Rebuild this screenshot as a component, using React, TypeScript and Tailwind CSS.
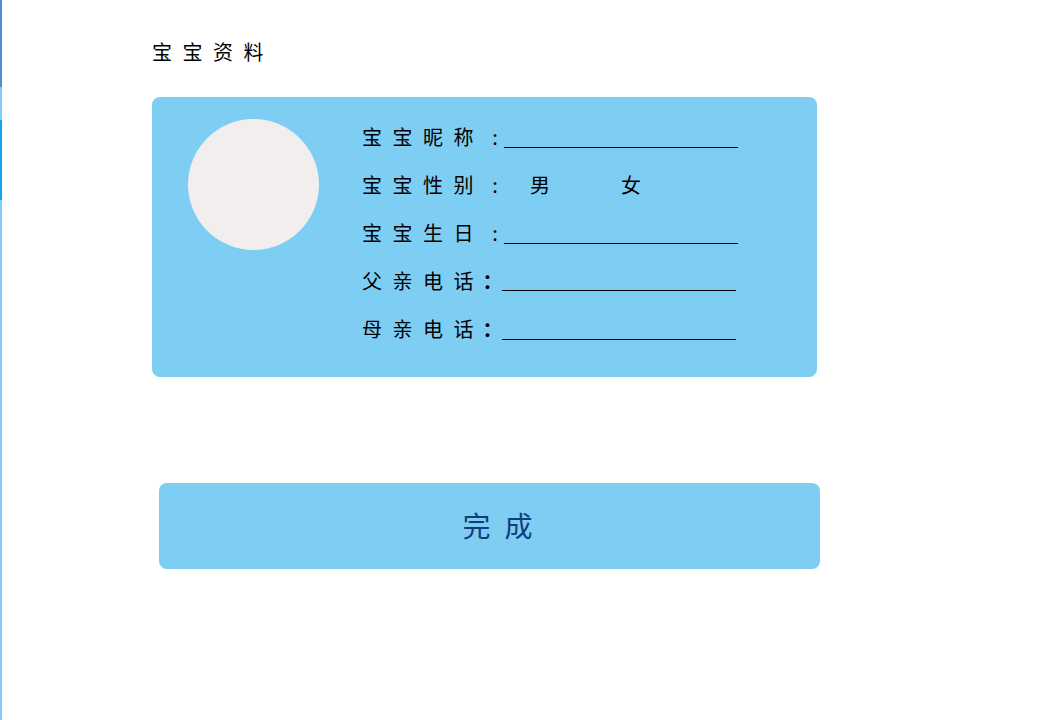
function Label({ text }: { text: string }) {
  const chars = text.split("");
  return (
    <span className="flex shrink-0">
      {chars.map((c, i) => (
        <span key={i} className={i === chars.length - 1 ? "w-[20px]" : "w-[30.5px]"}>
          {c}
        </span>
      ))}
    </span>
  );
}

export default function App() {
  const font = { fontFamily: '"Noto Sans CJK SC", "Noto Sans", sans-serif' };

  return (
    <div className="flex h-[720px] w-[1062px] bg-white text-black" style={font}>
      {/* left edge strip */}
      <div className="flex w-[2px] flex-col">
        <div className="h-[87px] bg-[#4a8fd8]"></div>
        <div className="h-[33px] bg-[#84cdf6]"></div>
        <div className="h-[80px] bg-[#0ea5ec]"></div>
        <div className="flex-1 bg-[#84cdf6]"></div>
      </div>

      <div className="flex flex-col pl-[150px] pt-[38px]">
        <h1 className="flex h-7 text-[20px] leading-7">
          <Label text="宝宝资料" />
        </h1>

        {/* Info card */}
        <div className="mt-[31px] flex h-[280px] w-[665px] rounded-lg bg-[#7ecdf3]">
          <div className="ml-[36px] mt-[22px] h-[131px] w-[131px] shrink-0 rounded-full bg-[#f2eeee]"></div>

          <div className="ml-[43px] flex flex-col pt-[16px] text-[20px] whitespace-nowrap">
            <div className="flex h-12 items-center">
              <Label text="宝宝昵称" />
              <span className="ml-[16.5px] w-[10px] text-center">:</span>
              <div className="ml-[4px] mt-[20px] h-px w-[234px] bg-black"></div>
            </div>
            <div className="flex h-12 items-center">
              <Label text="宝宝性别" />
              <span className="ml-[16.5px] w-[10px] text-center">:</span>
              <span className="ml-[30px]">男</span>
              <span className="ml-[71px]">女</span>
            </div>
            <div className="flex h-12 items-center">
              <Label text="宝宝生日" />
              <span className="ml-[16.5px] w-[10px] text-center">:</span>
              <div className="ml-[4px] mt-[20px] h-px w-[234px] bg-black"></div>
            </div>
            <div className="flex h-12 items-center">
              <Label text="父亲电话" />
              <span className="ml-[9px] w-[20px] shrink-0 text-center font-bold">：</span>
              <div className="ml-[-1px] mt-[18px] h-px w-[234px] bg-black"></div>
            </div>
            <div className="flex h-12 items-center">
              <Label text="母亲电话" />
              <span className="ml-[9px] w-[20px] shrink-0 text-center font-bold">：</span>
              <div className="ml-[-1px] mt-[20px] h-px w-[234px] bg-black"></div>
            </div>
          </div>
        </div>

        {/* Done button */}
        <button className="ml-[7px] mt-[106px] flex h-[86px] w-[661px] items-center justify-center rounded-lg bg-[#7ecdf3] pb-[3px] text-[28px] tracking-[14px] text-[#123d7c]">
          <span className="pl-[30px]">完成</span>
        </button>
      </div>
    </div>
  );
}
